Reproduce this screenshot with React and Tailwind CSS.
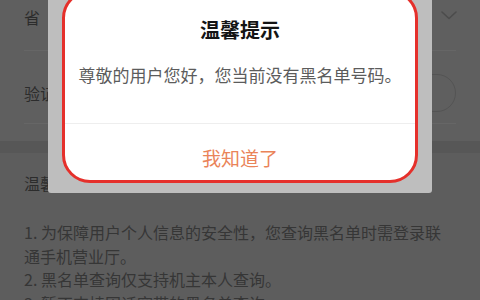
import React from 'react';

const FONT = { fontFamily: '"Noto Sans CJK SC", "Noto Sans", sans-serif' };

function Chevron() {
  return (
    <svg width="18" height="12" viewBox="0 0 18 12" fill="none">
      <path d="M2 3 L9 9.5 L16 3" stroke="#4c4c4c" strokeWidth="1.6" strokeLinecap="round" strokeLinejoin="round" />
    </svg>
  );
}

export default function App() {
  return (
    <div className="relative w-[480px] h-[300px] overflow-hidden bg-[#5d5d5d] text-[#2c2c2c]" style={FONT}>
      {/* page behind the mask */}
      <div className="bg-[#5f5f5f]">
        <div className="h-[50px] px-6 pt-[6px] flex items-start justify-between">
          <span className="text-[16px] leading-[22px]">省</span>
          <span className="mt-[3px] -mr-[2px]"><Chevron /></span>
        </div>
        <div className="mx-6 h-px bg-[#666666]" />
        <div className="h-[72px] px-6 pt-[12px] flex items-center justify-between">
          <span className="text-[16px] leading-[22px]">验证码</span>
          <div className="w-[110px] h-[38px] rounded-full border-[1.5px] border-[#545454]" />
        </div>
        <div className="mx-6 h-px bg-[#666666]" />
        <div className="h-[17px]" />
      </div>
      <div className="h-[12px] bg-[#575757]" />
      <div className="px-6 pt-[19px] text-[16px]">
        <div className="leading-[22px]">温馨提示：</div>
        <div className="mt-[27px] leading-[23.5px] text-[#363636] whitespace-nowrap">
          <div>1. 为保障用户个人信息的安全性，您查询黑名单时需登录联</div>
          <div>通手机营业厅。</div>
          <div>2. 黑名单查询仅支持机主本人查询。</div>
          <div>3. 暂不支持固话宽带的黑名单查询。</div>
        </div>
      </div>

      {/* dialog */}
      <div className="absolute left-[48px] top-0 w-[384px] h-[193px] bg-[#bebebe] rounded-b-[3px] px-[14px] overflow-hidden">
        <div className="-mt-[10px] h-[193px] bg-white rounded-[28px] border-[3px] border-[#e5302b] flex flex-col items-center">
          <div className="mt-[23px] text-[20px] leading-[28px] font-bold text-[#141414]">温馨提示</div>
          <div className="mt-[19px] text-[17px] leading-[24px] text-[#5c5c5c]">尊敬的用户您好，您当前没有黑名单号码。</div>
          <div className="mt-[36px] w-full h-px bg-[#eeeeee]" />
          <div className="mt-[21px] text-[19px] leading-[26px] text-[#ea8459]">我知道了</div>
        </div>
      </div>
    </div>
  );
}
